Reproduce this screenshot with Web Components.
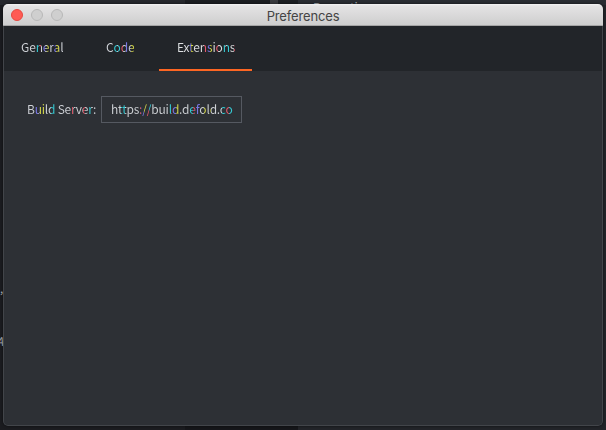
<!DOCTYPE html>
<html lang="en"><head><meta charset="utf-8"><title>Preferences</title>
<style>
html,body{margin:0;width:606px;height:430px;overflow:hidden;background:#1c1d21}
</style></head><body>
<desktop-backdrop>
<preferences-window heading="Preferences">
<tab-item slot="tabs" style="--w:76px;--ink:linear-gradient(90deg,#d0d3d8 15px,#35cbd5 15px 18px,#e5596b 18px 20px,#d0d3d8 20px 22px,#7a78e8 22px 24px,#d0d3d8 24px 26px,#d5d84a 26px 28px,#d0d3d8 28px 32px,#7a78e8 32px 35px,#d5d84a 35px 38px,#d0d3d8 38px)">General</tab-item>
<tab-item slot="tabs" style="--w:64px;--ink:linear-gradient(90deg,#d0d3d8 7px,#35cbd5 7px 11px,#d0d3d8 11px 12px,#35cbd5 12px 14px,#e5596b 14px 17px,#d0d3d8 17px 20px,#7a78e8 20px 23px,#d0d3d8 23px 25px,#d5d84a 25px)">Code</tab-item>
<tab-item slot="tabs" selected style="--w:93px;--ink:linear-gradient(90deg,#dfe1e3 12px,#7a78e8 12px 14px,#d5d84a 14px 17px,#dfe1e3 17px 27px,#e5596b 27px 30px,#7a78e8 30px 33px,#d5d84a 33px 36px,#dfe1e3 36px 39px,#e5596b 39px 41px,#dfe1e3 41px 46px,#35cbd5 46px 48px,#dfe1e3 48px 50px,#35cbd5 50px 53px,#dfe1e3 53px 57px,#e5596b 57px)">Extensions</tab-item>
<setting-row label="Build Server:"><text-field>https://build.defold.com</text-field></setting-row>
</preferences-window>
</desktop-backdrop>
<script>
const define=(name,html,setup)=>customElements.define(name,class extends HTMLElement{
 constructor(){super();const t=document.createElement('template');t.innerHTML=html;
 this.attachShadow({mode:'open'}).append(t.content.cloneNode(true));}
 connectedCallback(){if(setup)setup(this,this.shadowRoot)}
});
define('desktop-backdrop',`<style>
:host{display:block;position:relative;box-sizing:border-box;width:606px;height:430px;padding:4px 3px;overflow:hidden;background:linear-gradient(90deg,#1b1c20 185px,#15161a 185px 298px,#222429 298px)}
.top{position:absolute;left:0;top:0;width:606px;height:5px;background:linear-gradient(90deg,#26282d 185px,#1b1d21 185px 270px,#3a3b3f 270px 278px,#1d1f23 278px 298px,#292c32 298px)}
.behind{position:absolute;color:#aaadb2;font:12px/16px "Noto Sans CJK SC",sans-serif;letter-spacing:-.17px;white-space:nowrap}
.p{left:313px;top:-1px}.q{left:0;top:280px;color:#bbb}.a{left:-4px;top:333px;font-style:italic;color:#bbb}
</style><div class="top"></div><div class="behind p">Properties</div><div class="behind q">,</div><div class="behind a">A</div><slot></slot>`);
define('preferences-window',`<style>
:host{display:flex;flex-direction:column;position:relative;box-sizing:border-box;width:600px;height:422px;border-radius:5px;overflow:hidden;background:#2d3035;box-shadow:0 0 3px #0009}
:host::after{content:"";position:absolute;inset:22px 0 0;border:1px solid #42454a;border-top:0;border-radius:0 0 5px 5px;pointer-events:none}
header{height:22px;box-sizing:border-box;display:grid;grid-template-columns:1fr auto 1fr;align-items:center;padding:0 8px;background:linear-gradient(#f4f4f4,#e4e3e4 2px,#cecece);border-bottom:1px solid #a5a5a5}
.lights{display:flex;gap:8px}.lights i{box-sizing:border-box;width:12px;height:12px;border-radius:50%;background:#cfcfcf;border:1px solid #b8b8b8}.lights i:first-child{background:#ff5b54;border-color:#e5483f}
h1{margin:0;font:400 13px/18px Inter,sans-serif;letter-spacing:-.15px;padding-top:3px;color:#444}
nav{display:flex;height:45px;background:#222529;padding-left:1px}
main{padding:25px 24px}
</style><header><div class="lights"><i></i><i></i><i></i></div><h1></h1></header><nav><slot name="tabs"></slot></nav><main><slot></slot></main>`,
(h,r)=>r.querySelector('h1').textContent=h.getAttribute('heading'));
define('tab-item',`<style>
:host{display:flex;box-sizing:border-box;width:var(--w);height:45px;padding:0 0 3px 17px;align-items:center;margin-right:8px;font:12px/20px "Noto Sans CJK SC",sans-serif;letter-spacing:-.14px}
:host(:nth-of-type(2)){margin-left:1px;margin-right:6px}
:host([selected]){margin:0;border-bottom:2px solid #fd6623;padding:0 0 1px 18px}
span{background:var(--ink);-webkit-background-clip:text;background-clip:text;color:transparent;white-space:nowrap}
</style><span><slot></slot></span>`);
define('setting-row',`<style>
:host{display:flex;align-items:center;font:12px/20px "Noto Sans CJK SC",sans-serif;letter-spacing:-.22px}
label{width:74px;margin-bottom:2px;white-space:nowrap;background:linear-gradient(90deg,#d0d3d8 8px,#7a78e8 8px 11px,#d0d3d8 11px 13px,#d5d84a 13px 17px,#d0d3d8 17px 24px,#35cbd5 24px 28px,#d0d3d8 28px 44px,#e5596b 44px 46px,#d0d3d8 46px 56px,#e5596b 56px 58px,#d0d3d8 58px 61px,#35cbd5 61px 64px,#d0d3d8 64px);background-clip:text;-webkit-background-clip:text;color:transparent}
</style><label></label><slot></slot>`,(h,r)=>r.querySelector('label').textContent=h.getAttribute('label'));
define('text-field',`<style>
:host{display:block;box-sizing:border-box;width:141px;height:27px;border:1px solid #555961;padding:2px 8px 3px 9px;letter-spacing:-.2px}
div{overflow:hidden;white-space:nowrap;background:linear-gradient(90deg,#d0d3d7 10px,#35cbd5 10px 14px,#d0d3d7 14px 28px,#e5596b 28px 30px,#7a78e8 30px 33px,#d5d84a 33px 36px,#e5596b 36px 38px,#35cbd5 38px 41px,#d0d3d7 41px 58px,#35cbd5 58px 60px,#e5596b 60px 62px,#7a78e8 62px 65px,#d5d84a 65px 68px,#d0d3d7 68px 79px,#35cbd5 79px 82px,#e5596b 82px 84px,#7a78e8 84px 89px,#d0d3d7 89px 93px,#d5d84a 93px 96px,#d0d3d7 96px 98px,#d5d84a 98px 100px,#d0d3d7 100px 111px,#35cbd5 111px 115px,#e5596b 115px 118px,#35cbd5 118px);background-clip:text;-webkit-background-clip:text;color:transparent}
</style><div><slot></slot></div>`);
</script></body></html>
